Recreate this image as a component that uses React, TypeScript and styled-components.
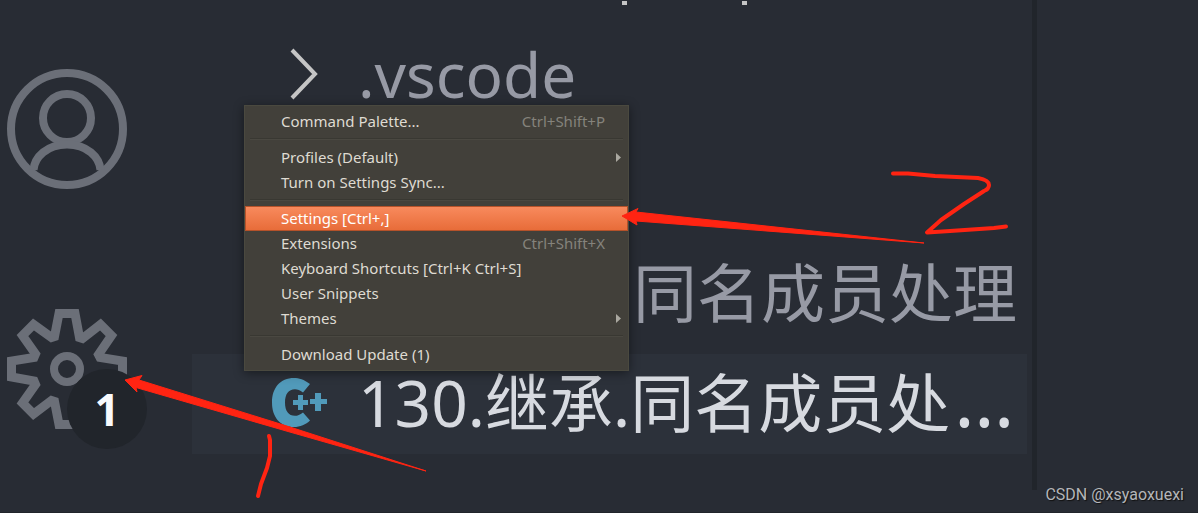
import React from "react";
import styled, { createGlobalStyle, css } from "styled-components";

const Global = createGlobalStyle`
  * { box-sizing: border-box; }
  html, body { margin: 0; height: 100%; }
  body { background: #282c34; overflow: hidden; }
  #root { height: 100%; }
  button { border: 0; background: none; padding: 0; margin: 0; font: inherit; color: inherit; text-align: left; }
`;

const Workbench = styled.div`
  position: relative;
  display: flex;
  height: 100vh;
  overflow: hidden;
  background: #282c34;
  color: #979aa5;
  font-family: "Noto Sans", "Noto Sans CJK SC", sans-serif;
  border-bottom: 1px solid #21252b;
`;

const ActivityBar = styled.nav`
  flex: 0 0 192px;
  display: flex;
  flex-direction: column;
  justify-content: flex-end;
  gap: 120px;
  padding: 0 0 83px 7px;
`;

const ActivityButton = styled.button`
  position: relative;
  width: 120px;
  height: 120px;
  color: #6b6f78;
  svg { display: block; width: 120px; height: 120px; }
`;

const Badge = styled.span`
  position: absolute;
  left: 60px;
  top: 60px;
  width: 80px;
  height: 80px;
  border-radius: 50%;
  display: flex;
  align-items: center;
  justify-content: center;
  background: #21252b;
  color: #f8fafd;
  font-size: 44px;
  line-height: 80px;
  font-weight: 700;
`;

const Sidebar = styled.aside`
  flex: 0 1 840px;
  min-width: 0;
  display: flex;
  flex-direction: column;
  justify-content: flex-end;
  gap: 10px;
  padding: 0 5px 58px 0;
`;

const TreeRow = styled.button<{ $selected?: boolean }>`
  flex: none;
  display: flex;
  align-items: center;
  width: 100%;
  height: 100px;
  padding-left: 76px;
  font-size: 64px;
  line-height: 80px;
  white-space: nowrap;
  ${(p) => p.$selected && css`
    background: #2c313a;
    color: #d7dae0;
  `}
`;

const SectionEdge = styled.div`
  height: 13px;
  padding-left: 430px;
  svg { display: block; }
`;

const RowIcon = styled.span`
  flex: 0 0 90px;
  display: flex;
  padding-bottom: 2px;
  svg { display: block; }
`;

const FolderLabel = styled.span`
  font-size: 62px;
`;

const FileLabel = styled.span<{ $indent?: number }>`
  padding-bottom: 2px;
  margin-left: ${(p) => p.$indent ?? 0}px;
`;

const Dots = styled.span`
  padding-left: 4px;
  font-size: 76px;
  line-height: 64px;
`;

const Sash = styled.div`
  flex: 0 0 5px;
  margin-bottom: 22px;
  background: #21252b;
`;

const Editor = styled.main`
  flex: 1;
  display: flex;
  align-items: flex-end;
  justify-content: flex-end;
  padding: 0 14px 7px 0;
`;

const Watermark = styled.span`
  font: 16px/20px "Roboto", sans-serif;
  color: #b4b6b9;
  white-space: nowrap;
  text-shadow: 1px 1px 1px #111;
`;

const Menu = styled.div`
  position: absolute;
  left: 244px;
  top: 105px;
  width: 385px;
  padding: 3px 0;
  border: 1px solid #4a493f;
  background: #42403a;
  box-shadow: 0 2px 10px rgba(0, 0, 0, 0.45);
  color: #dfdbd2;
  font-size: 15px;
`;

const MenuItem = styled.button<{ $active?: boolean }>`
  display: flex;
  align-items: center;
  width: 100%;
  height: 25px;
  padding: 0 7px 0 36px;
  line-height: 23px;
  white-space: nowrap;
  ${(p) => p.$active && css`
    color: #fff;
    background: linear-gradient(#f98b5e, #e76b38);
    box-shadow: inset 0 0 0 1px #b5522a;
  `}
`;

const Shortcut = styled.span`
  margin-left: auto;
  padding-right: 16px;
  color: #85837c;
`;

const SubArrow = styled.svg`
  margin-left: auto;
`;

const Separator = styled.hr`
  height: 2px;
  margin: 4px 5px 5px;
  border: 0;
  border-top: 1px solid #393832;
  border-bottom: 1px solid #4a4841;
`;

const Annotations = styled.svg`
  position: absolute;
  left: 0;
  top: 0;
  pointer-events: none;
`;

type Entry = { label: string; keys?: string; sub?: boolean; active?: boolean };

const groups: Entry[][] = [
  [{ label: "Command Palette...", keys: "Ctrl+Shift+P" }],
  [{ label: "Profiles (Default)", sub: true }, { label: "Turn on Settings Sync..." }],
  [
    { label: "Settings [Ctrl+,]", active: true },
    { label: "Extensions", keys: "Ctrl+Shift+X" },
    { label: "Keyboard Shortcuts [Ctrl+K Ctrl+S]" },
    { label: "User Snippets" },
    { label: "Themes", sub: true },
  ],
  [{ label: "Download Update (1)" }],
];

const AccountIcon = () => (
  <svg viewBox="0 0 120 120" fill="none" stroke="currentColor" strokeWidth="8" aria-hidden="true">
    <circle cx="60" cy="60" r="56" />
    <circle cx="60" cy="49" r="24" />
    <path d="M26.500 101C27.500 88 40 75.500 60 75.500S92.500 88 93.500 101" />
  </svg>
);

const GearIcon = () => (
  <svg viewBox="0 0 120 120" fill="none" stroke="currentColor" aria-hidden="true">
    <path
      strokeWidth="9"
      d="M52 4.500H68L72.500 28.500L75.500 29.500L93.500 15.500L104.500 26.500L91.500 45.500L93 48.500L115.500 52V68L93 72L91.500 75L104.500 94L93.500 105L75.500 92L72.500 93L68 115.500H52L47.500 92.500L44.500 91.500L26.500 105L15.500 94L28.500 75.500L27 72L4.500 68V52L27 48.500L28.500 45L15.500 26.500L26.500 15.500L44.500 28.500L47.500 27.500Z"
    />
    <circle cx="60" cy="60" r="13" strokeWidth="8" />
  </svg>
);

const CppIcon = () => (
  <svg width="60" height="50" viewBox="0 0 60 50" fill="#519aba" aria-hidden="true">
    <path d="M42 6C36 1.500 31 0 26 0C12 0 4 10 4 24.500C4 39 12 49 26 49C32 49 38 46.500 42 42.500L35 34.500C32 37 29.500 37.800 27 37.800C20.500 37.800 17 33 17 24.500C17 16 20.500 11.200 27 11.200C29.500 11.200 32 12 35 14.500Z" />
    <path d="M30 17h5v5h5v5h-5v5h-5v-5h-5v-5h5zM47 15h6v6h6v5h-6v7h-6v-7h-5v-5h5z" />
  </svg>
);

export default function App() {
  return (
    <>
      <Global />
      <Workbench lang="zh-CN">
        <ActivityBar aria-label="Activity bar">
          <ActivityButton aria-label="Accounts"><AccountIcon /></ActivityButton>
          <ActivityButton aria-label="Manage"><GearIcon /><Badge>1</Badge></ActivityButton>
        </ActivityBar>
        <Sidebar>
          <SectionEdge>
            <svg width="125" height="4" viewBox="0 0 125 4" fill="#c5c5c5" aria-hidden="true">
              <path d="M0 0h5v4h-5zM120 0h5v4h-5z" />
            </svg>
          </SectionEdge>
          <TreeRow>
            <RowIcon>
              <svg width="57" height="60" viewBox="0 0 57 60" fill="none" stroke="#c5c5c5" strokeWidth="4" aria-hidden="true">
                <path d="M24 7L47 31L24 55" />
              </svg>
            </RowIcon>
            <FolderLabel>.vscode</FolderLabel>
          </TreeRow>
          <TreeRow aria-label="Nested file" />
          <TreeRow><RowIcon /><FileLabel $indent={275}>同名成员处理</FileLabel></TreeRow>
          <TreeRow $selected>
            <RowIcon><CppIcon /></RowIcon>
            <FileLabel>130.继承.同名成员处<Dots>…</Dots></FileLabel>
          </TreeRow>
        </Sidebar>
        <Sash />
        <Editor><Watermark>CSDN @xsyaoxuexi</Watermark></Editor>
        <Menu role="menu">
          {groups.map((items, g) => (
            <React.Fragment key={g}>
              {g > 0 && <Separator />}
              {items.map((it) => (
                <MenuItem key={it.label} role="menuitem" $active={it.active}>
                  {it.label}
                  {it.keys && <Shortcut>{it.keys}</Shortcut>}
                  {it.sub && (
                    <SubArrow width="5" height="9" viewBox="0 0 5 9" fill="#aaa8a0" aria-hidden="true">
                      <path d="M0 0L5 4.500L0 9Z" />
                    </SubArrow>
                  )}
                </MenuItem>
              ))}
            </React.Fragment>
          ))}
        </Menu>
        <Annotations width="1198" height="513" viewBox="0 0 1198 513" aria-hidden="true">
          <g fill="#ff2412" stroke="#ff2412" strokeWidth="1" strokeLinejoin="round">
            <path d="M125 380L142 375.500L139 380L290 427L426 471L288 431.500L136 387.500L137 392Z" />
            <path d="M622 216L638 208.500L636 212L924 243L636 221L637 225Z" />
          </g>
          <g fill="none" stroke="#ff2412" strokeWidth="4" strokeLinecap="round" strokeLinejoin="round">
            <path d="M269 436L270 440V456L267 468L261 484L258 496" />
            <path d="M893 173.500H908L935 176L978 178Q989 180 989 185Q989 189 984 191L964 204L941 220L927 232.500L950 231L994 228L1006 226.500" />
          </g>
        </Annotations>
      </Workbench>
    </>
  );
}
